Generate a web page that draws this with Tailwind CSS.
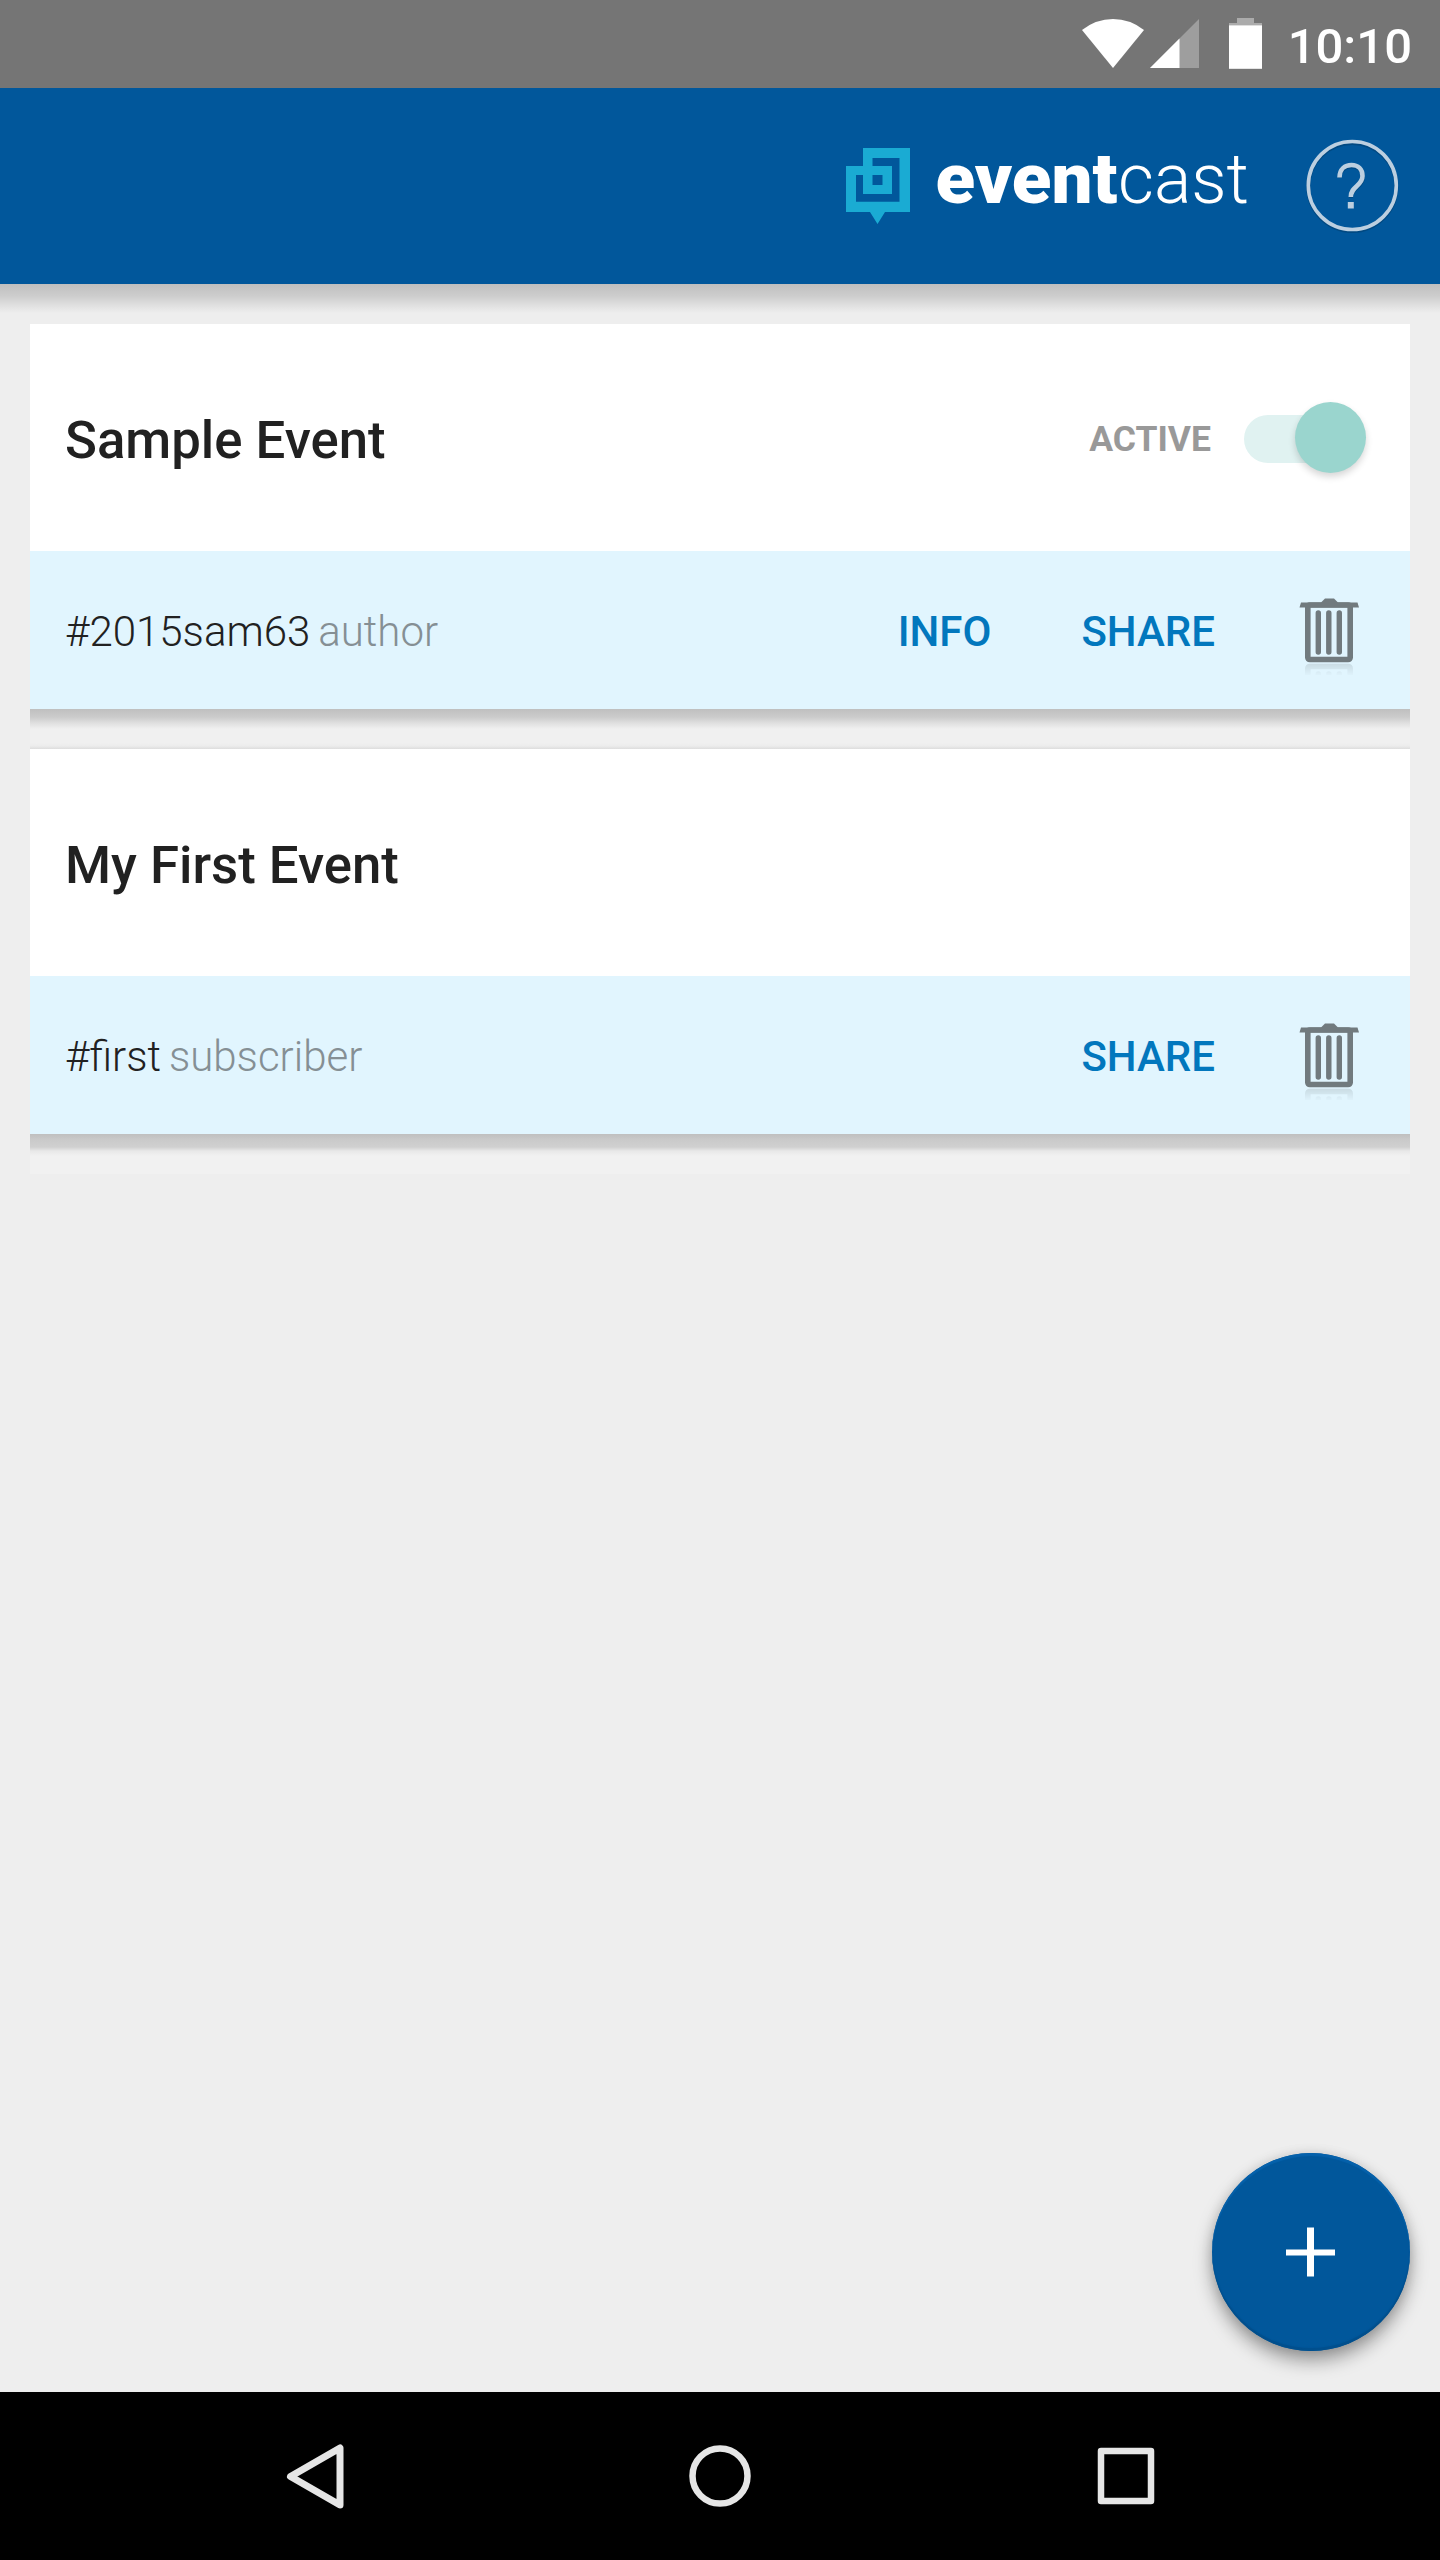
<!DOCTYPE html>
<html lang="en">
<head>
<meta charset="utf-8">
<title>eventcast</title>
<script src="https://cdn.jsdelivr.net/npm/@tailwindcss/browser@4"></script>
</head>
<body class="w-[1440px] h-[2560px] flex flex-col overflow-hidden bg-[#eeeeee] font-['Roboto',sans-serif] text-[#212121]">
<svg class="absolute size-0">
  <defs>
    <g id="bin">
      <rect x="8.800" y="7" width="42.400" height="54.500" rx="2" fill="none" stroke="currentColor" stroke-width="5.600"/>
      <path d="M.500 9.500 2 4.500H22L26 .5H35L39 4.500H58.500L60 9.500Z" fill="currentColor"/>
      <path d="M19.300 15V54M29.800 15V54M40.300 15V54" stroke="currentColor" stroke-width="5.400" stroke-linecap="round"/>
    </g>
    <linearGradient id="fade" x1="0" y1="0" x2="0" y2="1"><stop offset="0" stop-color="#fff" stop-opacity=".22"/><stop offset="1" stop-color="#fff" stop-opacity=".02"/></linearGradient>
    <mask id="reflect" maskUnits="userSpaceOnUse" x="0" y="65" width="60" height="12"><rect x="0" y="65" width="60" height="12" fill="url(#fade)"/></mask>
  </defs>
</svg>

<!-- Status bar -->
<div class="h-[88px] shrink-0 bg-[#757575] flex items-center justify-end pr-[28px] text-white">
  <svg class="w-[184px] h-[88px]" viewBox="1080 0 184 88">
    <path d="M1082 30Q1096 19 1113 19T1144 30L1113 68Z" fill="#fff"/>
    <path d="M1199 19V68H1150Z" fill="#9e9e9e"/>
    <path d="M1179.500 38.500V68H1150Z" fill="#fff"/>
    <path d="M1229 25.500V23H1237V18H1254V23H1262V25.500Z" fill="#ababab"/>
    <rect x="1229" y="25.300" width="33" height="43.500" fill="#fff"/>
  </svg>
  <span class="ml-[24px] mt-[4px] text-[49px] leading-none font-medium">10:10</span>
</div>

<!-- App bar -->
<header class="h-[196px] shrink-0 bg-[#01579b] flex justify-end pr-[40px] pt-[48px]">
  <svg class="w-[64px] h-[88px] mt-[12px]" viewBox="846 148 64 88">
    <path fill="#1aabd3" fill-rule="evenodd" d="M863 148H910V212H885L877.500 224 870 212H846V166H863ZM872.500 158V166H892V194H863V175H856V201.700H899.500V158ZM872.500 175V185H882.500V175Z"/>
  </svg>
  <svg class="w-[330px] h-[100px] ml-[17px] overflow-visible" viewBox="927 136 330 100" fill="#fff" font-family="Roboto, sans-serif" font-size="70">
    <text x="935.500" y="203" font-weight="900" textLength="182" lengthAdjust="spacingAndGlyphs">event</text>
    <text x="1118" y="203" font-weight="300" textLength="131" lengthAdjust="spacingAndGlyphs">cast</text>
  </svg>
  <svg class="w-[100px] h-[110px] ml-[43px]" viewBox="1300 136 100 110">
    <g fill="none" stroke="#013f72" stroke-opacity=".6" stroke-width="4" transform="translate(0 1.500)">
      <circle cx="1352.300" cy="185.500" r="44"/>
      <path d="M1339.500 176.500C1339.500 169 1345 165 1351.500 165S1363 169 1363 176C1363 186 1351 186 1351 196.500"/>
    </g>
    <g fill="none" stroke="#bccfe0" stroke-width="3.600">
      <circle cx="1352.300" cy="185.500" r="44"/>
      <path stroke-width="4.600" d="M1339.500 177.500C1339.500 169 1345 165 1351.500 165S1362.500 169 1362.500 176C1362.500 186 1350.800 186 1350.800 197"/>
      <path stroke-width="6" d="M1350.800 202V208.500"/>
    </g>
  </svg>
</header>
<div class="h-[30px] shrink-0 bg-[linear-gradient(to_bottom,#bfbfbf_0px,#cdcdcd_12px,#dddddd_20px,#eeeeee_29px)]"></div>

<!-- Event list -->
<main class="grow px-[30px] pt-[10px]">
  <section>
    <div class="h-[227px] bg-white flex items-center justify-between pl-[35px] pr-[43px]">
      <h2 class="pt-[5px] text-[52.700px] font-medium leading-none">Sample Event</h2>
      <div class="flex items-center">
        <span class="pt-[4px] text-[35.500px] font-bold leading-none text-[#999999]">ACTIVE</span>
        <div class="ml-[32px] w-[124px] h-[72px] flex items-center relative">
          <div class="w-[112px] h-[48px] mt-[3px] ml-px rounded-full bg-[#e0f2f1]"></div>
          <div class="absolute right-0 top-0 mr-[1px] size-[71px] rounded-full bg-[#9ad5ce] shadow-[0_4px_7px_rgba(0,0,0,0.16)]"></div>
        </div>
      </div>
    </div>
    <div class="h-[158px] bg-[#e1f5fe] flex items-center pl-[35px] pr-[49px]">
      <p class="pt-[3px] grow text-[42px] font-light leading-none">#2015sam63<span class="ml-[8px] text-[#858f94]">author</span></p>
      <a class="pt-[3px] mr-[90px] text-[42px] font-medium leading-none text-[#0277bd]">INFO</a>
      <a class="pt-[3px] mr-[84px] text-[42px] font-medium leading-none text-[#0277bd]">SHARE</a>
      <svg class="w-[62px] h-[78px] mt-[14px] text-[#717a7e]" viewBox="0 0 62 78"><use href="#bin"/><g mask="url(#reflect)"><use href="#bin" transform="matrix(1 0 0 -1 0 130)"/></g></svg>
    </div>
    <div class="h-[40px] bg-[linear-gradient(to_bottom,#bfbfbf_0px,#cbcbcb_8px,#dfdfdf_14px,#f0f0f0_20px,#f0f0f0_34px,#ececec_37px,#dddddd_40px)]"></div>
  </section>
  <section>
    <div class="h-[227px] bg-white flex items-center pl-[35px]">
      <h2 class="pt-[5px] text-[52.700px] font-medium leading-none">My First Event</h2>
    </div>
    <div class="h-[158px] bg-[#e1f5fe] flex items-center pl-[35px] pr-[49px]">
      <p class="pt-[3px] grow text-[42px] font-light leading-none">#first<span class="ml-[8px] text-[#858f94]">subscriber</span></p>
      <a class="pt-[3px] mr-[84px] text-[42px] font-medium leading-none text-[#0277bd]">SHARE</a>
      <svg class="w-[62px] h-[78px] mt-[14px] text-[#717a7e]" viewBox="0 0 62 78"><use href="#bin"/><g mask="url(#reflect)"><use href="#bin" transform="matrix(1 0 0 -1 0 130)"/></g></svg>
    </div>
    <div class="h-[40px] bg-[linear-gradient(to_bottom,#bfbfbf_0px,#cacaca_6px,#d0d0d0_13px,#e8e8e8_17px,#f1f1f1_22px)]"></div>
  </section>
</main>

<button class="absolute left-[1212px] top-[2153px] size-[198px] rounded-full bg-[#01579b] flex items-center justify-center shadow-[0_10px_18px_rgba(0,0,0,0.36),0_0_12px_rgba(0,0,0,0.1),inset_0_3px_1px_#0561ab,inset_0_-3px_1px_#014f8d]">
  <svg class="size-[50px] mr-[3px] mb-[1px]" viewBox="0 0 50 50"><path d="M22 .5H29V22.500H50V28.500H29V49.500H22V28.500H1V22.500H22Z" fill="#fff"/></svg>
</button>

<!-- Navigation bar -->
<nav class="h-[168px] shrink-0 bg-black flex items-center pl-[284px]">
  <svg class="w-[62px] h-[68px]" viewBox="284 2442 62 68"><path d="M340 2448V2505L290.500 2476.500Z" fill="none" stroke="#e6e6e6" stroke-width="7" stroke-linejoin="round"/></svg>
  <svg class="w-[64px] h-[64px] ml-[342px]" viewBox="0 0 64 64"><circle cx="32" cy="32" r="27.500" fill="none" stroke="#e6e6e6" stroke-width="6.500"/></svg>
  <svg class="w-[60px] h-[60px] ml-[344px]" viewBox="0 0 60 60"><rect x="5" y="5" width="50" height="50" fill="none" stroke="#e6e6e6" stroke-width="6.500" stroke-linejoin="round"/></svg>
</nav>
</body>
</html>
